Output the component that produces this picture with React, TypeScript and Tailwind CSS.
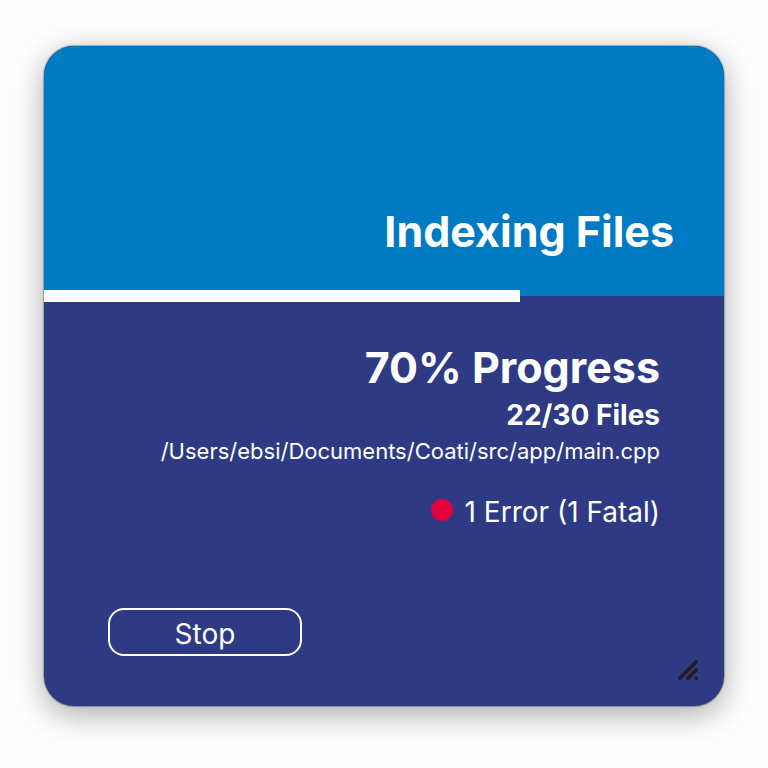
const progress = 70;

function ResizeGrip() {
  return (
    <svg
      className="absolute right-6 bottom-6 size-6"
      viewBox="0 0 24 24"
      fill="none"
      stroke="#231f20"
      strokeWidth="3.6"
      strokeLinecap="round"
      aria-hidden="true"
    >
      <path d="M3.8 20.2 20.2 3.8M12 20.2 20.2 12" />
      <path d="M20.2 20.2h.01" />
    </svg>
  );
}

export default function App() {
  return (
    <main className="flex min-h-screen flex-col bg-[#fefefe] px-11 pt-[46px] pb-[62px] font-['Inter','Liberation_Sans',sans-serif] text-white">
      <section className="relative flex grow flex-col overflow-hidden rounded-[30px] bg-[#2e3b84] shadow-[0_0_1px_1px_rgba(0,0,0,0.28),0_8px_32px_rgba(0,0,0,0.34)]">
        <header className="flex min-h-[250px] items-end justify-end bg-[#007ac3] px-[50px] pb-[37px]">
          <h1 className="text-[43px] leading-[56px] font-bold">Indexing Files</h1>
        </header>
        <div
          role="progressbar"
          aria-label="Indexing progress"
          aria-valuenow={progress}
          aria-valuemin={0}
          aria-valuemax={100}
          className="relative -my-1.5 h-3"
        >
          <div className="h-full bg-white" style={{ width: `${progress}%` }} />
        </div>
        <div className="flex grow flex-col px-16 pt-[43px] pb-[50px] text-right">
          <h2 className="text-[43px] leading-[56px] font-bold">{progress}% Progress</h2>
          <p className="text-[28px] leading-10 font-bold">22/30 Files</p>
          <p className="text-[22px] leading-8">/Users/ebsi/Documents/Coati/src/app/main.cpp</p>
          <p className="mt-[25px] flex items-center justify-end gap-3 text-[28px] leading-10">
            <span className="mb-1 size-[22px] rounded-full bg-[#e4003a]" />
            1 Error (1 Fatal)
          </p>
          <button
            type="button"
            className="mt-auto h-12 w-[194px] rounded-2xl border-2 border-white pt-1 text-[28px] leading-10"
          >
            Stop
          </button>
        </div>
        <ResizeGrip />
      </section>
    </main>
  );
}
